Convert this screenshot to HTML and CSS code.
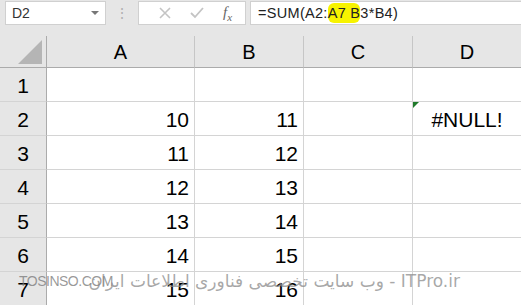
FILE: index.html
```html
<!DOCTYPE html>
<html lang="en">
<head>
    <meta charset="UTF-8">
    <title>Excel #NULL! error</title>
    <link rel="stylesheet" href="styles.css">
</head>
<body>
    <div class="toolbar">
        <div class="name-box">
            <span>D2</span>
            <span class="caret"></span>
        </div>
        <div class="grip">&#8942;</div>
        <div class="fx-buttons">
            <svg width="14" height="14" viewBox="0 0 14 14"><path d="M2 2 L12 12 M12 2 L2 12" stroke="#c4c4c4" stroke-width="1.6" fill="none"/></svg>
            <svg width="16" height="14" viewBox="0 0 16 14"><path d="M2 7 L6 11 L14 2" stroke="#c4c4c4" stroke-width="1.8" fill="none"/></svg>
            <span class="fx">f<sub>x</sub></span>
        </div>
        <div class="formula">=SUM(A2:<mark>A7 B</mark>3*B4)</div>
    </div>

    <div class="sheet">
        <div class="corner"><span class="tri"></span></div>
        <div class="col-head">A</div>
        <div class="col-head">B</div>
        <div class="col-head">C</div>
        <div class="col-head last">D</div>

        <div class="row-head">1</div>
        <div class="cell"></div><div class="cell"></div><div class="cell"></div><div class="cell last"></div>

        <div class="row-head">2</div>
        <div class="cell num">10</div><div class="cell num">11</div><div class="cell"></div>
        <div class="cell last err"><span class="flag"></span>#NULL!</div>

        <div class="row-head">3</div>
        <div class="cell num">11</div><div class="cell num">12</div><div class="cell"></div><div class="cell last"></div>

        <div class="row-head">4</div>
        <div class="cell num">12</div><div class="cell num">13</div><div class="cell"></div><div class="cell last"></div>

        <div class="row-head">5</div>
        <div class="cell num">13</div><div class="cell num">14</div><div class="cell"></div><div class="cell last"></div>

        <div class="row-head">6</div>
        <div class="cell num">14</div><div class="cell num">15</div><div class="cell"></div><div class="cell last"></div>

        <div class="row-head">7</div>
        <div class="cell num">15</div><div class="cell num">16</div><div class="cell"></div><div class="cell last"></div>
    </div>

    <div class="watermark">
        <span class="wm-left">TOSINSO.COM</span>
        <span class="wm-right">وب سایت تخصصی فناوری اطلاعات ایران - ITPro.ir</span>
    </div>
</body>
</html>
```

FILE: styles.css
```css
body {
    margin: 0;
    width: 521px;
    height: 305px;
    overflow: hidden;
    background: #ffffff;
    font-family: "Liberation Sans", Arial, sans-serif;
    color: #000;
    position: relative;
}
.toolbar {
    height: 36px;
    background: #e6e6e6;
    display: flex;
    align-items: flex-start;
    padding-top: 1px;
    box-sizing: border-box;
}
.name-box {
    margin-left: 5px;
    width: 101px;
    height: 24px;
    box-sizing: border-box;
    background: #fff;
    border: 1px solid #d0d0d0;
    display: flex;
    align-items: center;
    justify-content: space-between;
    padding: 0 6px 0 6px;
    font-size: 14px;
    color: #333;
}
.caret {
    width: 0;
    height: 0;
    border-left: 4px solid transparent;
    border-right: 4px solid transparent;
    border-top: 4px solid #777;
}
.grip {
    width: 32px;
    text-align: center;
    color: #b0b0b0;
    font-size: 14px;
    line-height: 24px;
}
.fx-buttons {
    width: 108px;
    height: 24px;
    box-sizing: border-box;
    background: #fff;
    border: 1px solid #d0d0d0;
    display: flex;
    align-items: center;
    justify-content: space-around;
    padding: 0 4px 0 10px;
}
.fx {
    font-family: "Liberation Serif", serif;
    font-style: italic;
    font-size: 15px;
    color: #666;
}
.fx sub {
    font-size: 11px;
}
.formula {
    margin-left: 4px;
    flex: 1;
    height: 24px;
    box-sizing: border-box;
    background: #fff;
    border: 1px solid #d0d0d0;
    border-right: none;
    padding-left: 7px;
    font-size: 14.5px;
    letter-spacing: 0.3px;
    line-height: 22px;
    color: #222;
}
.formula mark {
    background: #f7f300;
    color: #222;
    border-radius: 6px;
    padding: 2px 0;
}
.sheet {
    display: grid;
    grid-template-columns: 47px 148px 109px 109px 108px;
    grid-template-rows: 32px repeat(7, 34px);
}
.corner {
    background: #e6e6e6;
    border-right: 1px solid #ababab;
    border-bottom: 1px solid #ababab;
    position: relative;
}
.tri {
    position: absolute;
    right: 4px;
    bottom: 3px;
    width: 0;
    height: 0;
    border-left: 24px solid transparent;
    border-bottom: 24px solid #b5b5b5;
}
.col-head {
    background: #e6e6e6;
    border-right: 1px solid #c6c6c6;
    border-bottom: 1px solid #ababab;
    display: flex;
    align-items: center;
    justify-content: center;
    font-size: 20px;
    padding-top: 2px;
}
.col-head.last {
    border-right: none;
}
.row-head {
    background: #e6e6e6;
    border-right: 1px solid #ababab;
    border-bottom: 1px solid #d4d4d4;
    display: flex;
    align-items: center;
    justify-content: center;
    font-size: 21px;
    padding-top: 2px;
}
.cell {
    border-right: 1px solid #d4d4d4;
    border-bottom: 1px solid #d4d4d4;
    font-size: 21px;
    display: flex;
    align-items: center;
    padding-top: 2px;
}
.cell.last {
    border-right: none;
}
.num {
    justify-content: flex-end;
    padding-right: 5px;
}
.err {
    justify-content: center;
    position: relative;
}
.flag {
    position: absolute;
    left: 0;
    top: 0;
    width: 0;
    height: 0;
    border-top: 6px solid #1f7a2a;
    border-right: 6px solid transparent;
}
.watermark {
    position: absolute;
    left: 0;
    right: 0;
    top: 271px;
    height: 24px;
    pointer-events: none;
}
.wm-left {
    position: absolute;
    left: 19px;
    top: 2px;
    font-size: 14px;
    color: rgba(120, 120, 120, 0.75);
    letter-spacing: -0.5px;
}
.wm-right {
    position: absolute;
    right: 61px;
    top: 0;
    font-family: "DejaVu Sans", sans-serif;
    font-size: 17px;
    color: rgba(140, 140, 140, 0.75);
    white-space: nowrap;
    direction: ltr;
}
```
